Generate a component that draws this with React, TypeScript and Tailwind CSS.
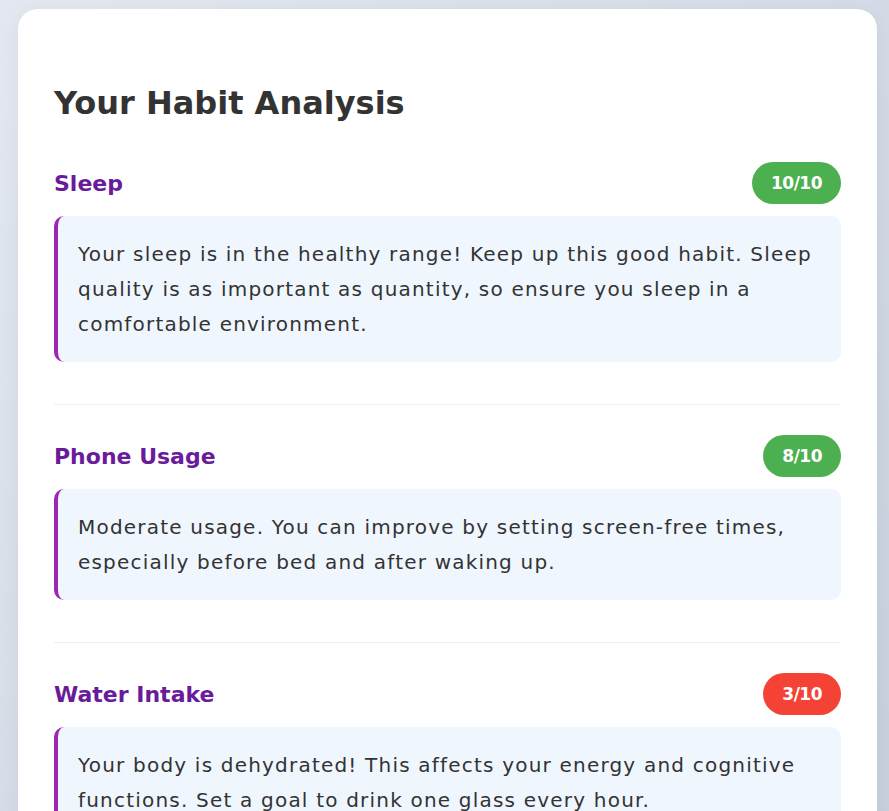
type Habit = {
  name: string;
  score: number;
  text: string;
};

const habits: Habit[] = [
  {
    name: "Sleep",
    score: 10,
    text: "Your sleep is in the healthy range! Keep up this good habit. Sleep quality is as important as quantity, so ensure you sleep in a comfortable environment.",
  },
  {
    name: "Phone Usage",
    score: 8,
    text: "Moderate usage. You can improve by setting screen-free times, especially before bed and after waking up.",
  },
  {
    name: "Water Intake",
    score: 3,
    text: "Your body is dehydrated! This affects your energy and cognitive functions. Set a goal to drink one glass every hour.",
  },
];

const HabitItem = ({ habit }: { habit: Habit }) => {
  const good = habit.score >= 7;
  return (
    <div className="mb-[30px] border-b border-[#eeeeee] pb-[42px] last:border-b-0">
      <div className="mb-[12px] flex items-center justify-between">
        <h3 className="text-[22px] font-bold text-[#6a1b9a]">{habit.name}</h3>
        <span
          className={`rounded-full px-[19px] py-[10px] text-[17px] font-bold leading-[22px] tracking-[-0.5px] text-white ${
            good ? "bg-[#4caf50]" : "bg-[#f44336]"
          }`}
        >
          {habit.score}/10
        </span>
      </div>
      <div className="rounded-[10px] border-l-4 border-[#9c27b0] bg-[#f0f6fe] px-[20px] py-[20.5px] text-[20px] leading-[35px] tracking-[1.2px] text-[#333333]">
        {habit.text}
      </div>
    </div>
  );
};

export default function App() {
  return (
    <div
      className="min-h-screen bg-gradient-to-br from-[#e3e8f0] to-[#c5cedc] pt-[9px] pl-[18px]"
      style={{ fontFamily: '"DejaVu Sans", sans-serif' }}
    >
      <div className="w-[859px] rounded-[20px] bg-white px-[36px] pt-[74px] pb-[40px] shadow-[0_4px_20px_rgba(0,0,0,0.05)]">
        <h2 className="mb-[39px] text-[32px] font-bold leading-[40px] text-[#333333]">
          Your Habit Analysis
        </h2>
        {habits.map((h) => (
          <HabitItem key={h.name} habit={h} />
        ))}
      </div>
    </div>
  );
}
